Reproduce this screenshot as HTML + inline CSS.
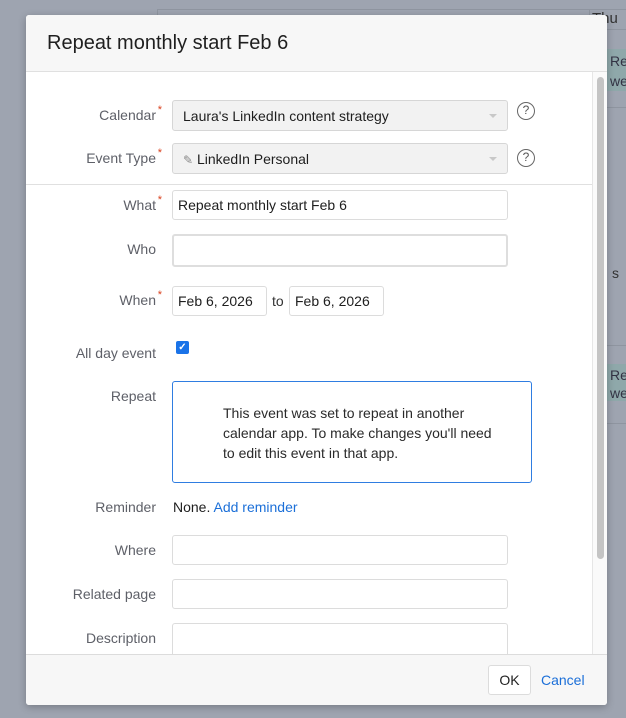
<!DOCTYPE html>
<html><head><style>
*{box-sizing:border-box;margin:0;padding:0}
body{width:626px;height:718px;overflow:hidden;background:#9ea4b0;font-family:"Liberation Sans",sans-serif;position:relative}
.a{position:absolute}
.lbl{position:absolute;right:470px;font-size:14px;color:#5e6068;text-align:right;white-space:nowrap}
.req::after{content:"*";color:#d9411e;font-size:11px;position:absolute;right:-6px;top:-3px}
.inp{position:absolute;left:172px;width:336px;height:30px;border:1px solid #dcdcdc;border-radius:3px;background:#fff;font-size:14px;color:#1e1e1e;padding:6px 5px}
.sel{background:#f2f2f2;border:1px solid #d6d6d6;padding:7px 10px}
.car{position:absolute;right:10px;top:13px;border-left:4px solid transparent;border-right:4px solid transparent;border-top:4px solid #c8c8c8}
.q{position:absolute;left:517px;width:18px;height:18px;border:1.5px solid #666;border-radius:50%;font-size:12px;color:#555;text-align:center;line-height:15px}
</style></head><body>
<!-- background calendar -->
<div class="a" style="left:157px;top:9px;width:469px;height:1px;background:#8f95a0"></div>
<div class="a" style="left:157px;top:29px;width:469px;height:1px;background:#8f95a0"></div>
<div class="a" style="left:157px;top:9px;width:1px;height:20px;background:#8f95a0"></div>
<div class="a" style="left:589px;top:9px;width:1px;height:20px;background:#8f95a0"></div>
<div class="a" style="left:592px;top:10px;font-size:15px;color:#333">Thu</div>
<div class="a" style="left:607px;top:49px;width:19px;height:42px;background:#8fa8aa"></div>
<div class="a" style="left:610px;top:51px;font-size:14px;color:#334;line-height:20px">Re<br>we</div>
<div class="a" style="left:607px;top:107px;width:19px;height:1px;background:#8f95a0"></div>
<div class="a" style="left:607px;top:345px;width:19px;height:1px;background:#8f95a0"></div>
<div class="a" style="left:607px;top:364px;width:19px;height:37px;background:#8fa8aa"></div>
<div class="a" style="left:610px;top:366px;font-size:14px;color:#334;line-height:18px">Re<br>we</div>
<div class="a" style="left:607px;top:423px;width:19px;height:1px;background:#8f95a0"></div>
<div class="a" style="left:612px;top:265px;font-size:14px;color:#333">s</div>
<!-- dialog -->
<div class="a" style="left:26px;top:15px;width:581px;height:690px;background:#fff;border-radius:3px;box-shadow:0 2px 8px rgba(0,0,0,.25);overflow:hidden">
 <div class="a" style="left:0;top:0;width:581px;height:57px;background:#f7f7f7;border-bottom:1px solid #e0e0e0"></div>
 <div class="a" style="left:21px;top:17px;font-size:20px;color:#1f1f1f">Repeat monthly start Feb 6</div>
 <div class="a" style="left:566px;top:57px;width:15px;height:582px;background:#fafafa;border-left:1px solid #e6e6e6"></div>
 <div class="a" style="left:571px;top:62px;width:7px;height:482px;background:#c4c4c4;border-radius:4px"></div>
 <div class="a" style="left:0;top:169px;width:566px;height:1px;background:#e0e0e0"></div>
 <div class="a" style="left:0;top:639px;width:581px;height:51px;background:#f7f7f7;border-top:1px solid #dcdcdc"></div>
</div>
<div class="lbl req" style="top:107px">Calendar</div>
<div class="inp sel" style="top:100px;height:31px">Laura's LinkedIn content strategy<div class="car"></div></div>
<div class="q" style="top:102px">?</div>
<div class="lbl req" style="top:150px">Event Type</div>
<div class="inp sel" style="top:143px;height:31px"><span style="color:#888;font-size:12px">✎</span> LinkedIn Personal<div class="car"></div></div>
<div class="q" style="top:149px">?</div>
<div class="lbl req" style="top:197px">What</div>
<div class="inp" style="top:190px">Repeat monthly start Feb 6</div>
<div class="lbl" style="top:241px">Who</div>
<div class="inp" style="top:234px;height:33px;border:2px solid #dedede"></div>
<div class="lbl req" style="top:292px">When</div>
<div class="inp" style="top:286px;width:95px">Feb 6, 2026</div>
<div class="a" style="left:272px;top:293px;font-size:14px;color:#333">to</div>
<div class="inp" style="top:286px;left:289px;width:95px">Feb 6, 2026</div>
<div class="lbl" style="top:345px">All day event</div>
<div class="a" style="left:176px;top:341px;width:13px;height:13px;background:#1a73e8;border-radius:2px;color:#fff;font-size:10px;line-height:13px;text-align:center;font-weight:bold">✓</div>
<div class="lbl" style="top:388px">Repeat</div>
<div class="a" style="left:172px;top:381px;width:360px;height:102px;border:1px solid #2f7de1;border-radius:3px"></div>
<div class="a" style="left:223px;top:403px;font-size:14px;color:#2a2a2a;line-height:20px">This event was set to repeat in another<br>calendar app. To make changes you'll need<br>to edit this event in that app.</div>
<div class="lbl" style="top:499px">Reminder</div>
<div class="a" style="left:173px;top:499px;font-size:14px;color:#1e1e1e">None. <span style="color:#1b6fd8">Add reminder</span></div>
<div class="lbl" style="top:542px">Where</div>
<div class="inp" style="top:535px"></div>
<div class="lbl" style="top:586px">Related page</div>
<div class="inp" style="top:579px"></div>
<div class="lbl" style="top:630px">Description</div>
<div class="inp" style="top:623px;height:31px;border-bottom:none;border-radius:3px 3px 0 0"></div>
<div class="a" style="left:488px;top:665px;width:43px;height:30px;background:#fff;border:1px solid #dcdcdc;border-radius:3px;font-size:14px;color:#222;text-align:center;line-height:28px">OK</div>
<div class="a" style="left:541px;top:672px;font-size:14px;color:#1b6fd8">Cancel</div>
</body></html>
